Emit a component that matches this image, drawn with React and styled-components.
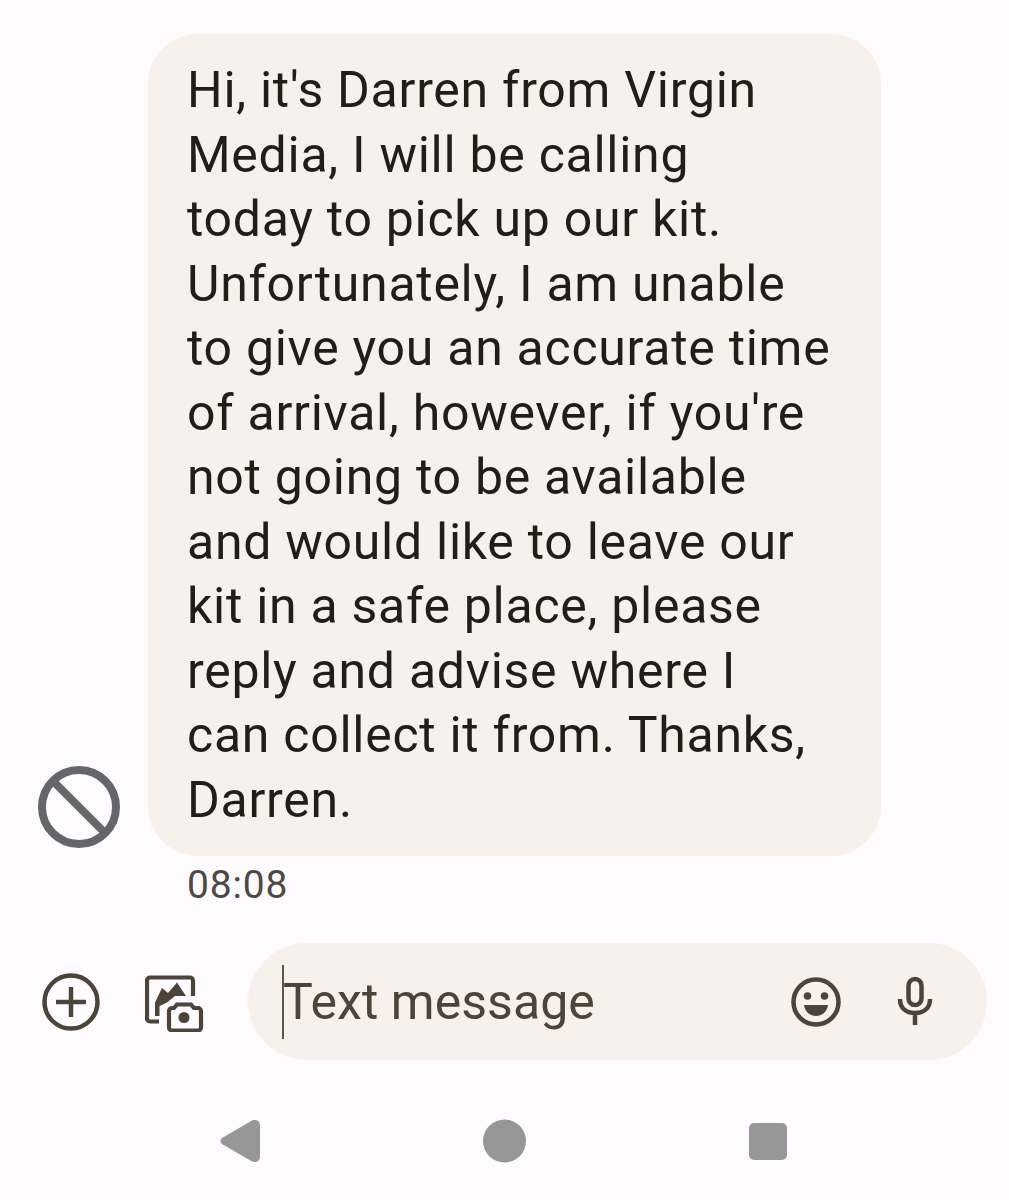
import React from "react";
import styled, { createGlobalStyle } from "styled-components";

const Global = createGlobalStyle`
  html, body { margin: 0; padding: 0; background: #fdfbfe; }
  #root { width: 1009px; height: 1200px; overflow: hidden; }
`;
const Screen = styled.main`
  width: 1009px; height: 1200px; box-sizing: border-box; padding-top: 34px;
  background: #fdfbfe; display: flex; flex-direction: column;
  font-family: Roboto, "Noto Sans", sans-serif;
`;
const MessageRow = styled.section`
  display: flex; align-items: flex-end; padding-left: 38px; gap: 28px;
`;
const Avatar = styled.svg`
  width: 82px; height: 82px; flex: none; margin-bottom: 8px; display: block;
`;
const Bubble = styled.div`
  width: 733px; height: 822px; box-sizing: border-box; padding: 24px 0 0 39px;
  background: #f8f0ea; border-radius: 50px; color: #231d18;
  font-size: 50px; line-height: 64.5px; letter-spacing: 0.72px;
`;
const Line = styled.span`display: block; white-space: nowrap;`;
const Time = styled.div`
  margin: 6px 0 0 187px; height: 46px; font-size: 39px; line-height: 46px; letter-spacing: 0.85px; color: #4f4943;
`;
const Composer = styled.section`
  display: flex; align-items: center; margin-top: 35px; padding-left: 42px;
`;
const ActionIcon = styled.svg`
  width: 60px; height: 60px; flex: none; display: block; margin-right: ${p => p.$gap}px;
`;
const Field = styled.div`
  width: 739px; height: 117px; box-sizing: border-box; background: #f8f0ea; border-radius: 59px;
  display: flex; align-items: center; padding: 0 54px 0 34px;
`;
const Caret = styled.span`
  width: 2px; height: 74px; background: #5d564f; flex: none; margin-right: -1px;
`;
const Placeholder = styled.span`
  flex: 1; font-size: 50px; letter-spacing: 0.05px; color: #4d4339; line-height: 60px;
`;
const FieldIcon = styled.svg`
  width: ${p => p.$w}px; height: 60px; flex: none; display: block; margin-right: ${p => p.$gap}px;
`;
const Nav = styled.nav`
  display: flex; align-items: center; margin-top: 59px; padding-left: 220px;
`;
const NavIcon = styled.svg`
  width: ${p => p.$w}px; height: 44px; display: block; flex: none; margin-right: ${p => p.$gap}px;
`;

const lines = [
  "Hi, it's Darren from Virgin",
  "Media, I will be calling",
  "today to pick up our kit.",
  "Unfortunately, I am unable",
  "to give you an accurate time",
  "of arrival, however, if you're",
  "not going to be available",
  "and would like to leave our",
  "kit in a safe place, please",
  "reply and advise where I",
  "can collect it from. Thanks,",
  "Darren.",
];

export default function App() {
  return (
    <Screen>
      <Global />
      <MessageRow>
        <Avatar viewBox="0 0 82 82" fill="none" stroke="#63666b" strokeWidth="8">
          <circle cx="41" cy="41" r="37" />
          <path d="M15 15 L67 67" />
        </Avatar>
        <Bubble>
          {lines.map(l => <Line key={l}>{l}</Line>)}
        </Bubble>
      </MessageRow>
      <Time>08:08</Time>
      <Composer>
        <ActionIcon $gap={43} viewBox="0 0 60 60" fill="none" stroke="#4d4339" strokeWidth="4.5">
          <circle cx="29" cy="30" r="26.5" />
          <path d="M14 30 H44 M29 15 V45" />
        </ActionIcon>
        <ActionIcon $gap={43} viewBox="0 0 60 60" fill="none">
          <path d="M14 49.5 H5 a3 3 0 0 1 -3 -3 V8.5 a3 3 0 0 1 3 -3 H45 a3 3 0 0 1 3 3 V24" stroke="#4d4339" strokeWidth="4.2" />
          <path d="M10 44 V30.5 L17 16 L23 21 L32 10.5 L41 24 H30 L22 30.5 L14.5 34 V44 Z" fill="#4d4339" />
          <path d="M27 36 H29 L32 32.5 H46 L49 36 H53 a3 3 0 0 1 3 3 V55.5 a3 3 0 0 1 -3 3 H27 a3 3 0 0 1 -3 -3 V39 a3 3 0 0 1 3 -3 Z" stroke="#4d4339" strokeWidth="4.2" fill="#fdfbfe" />
          <circle cx="39" cy="45.5" r="5.5" fill="#4d4339" />
        </ActionIcon>
        <Field>
          <Caret />
          <Placeholder>Text message</Placeholder>
          <FieldIcon $w={50} $gap={56} viewBox="0 0 50 60" fill="none">
            <circle cx="25" cy="30" r="22.5" stroke="#4d4339" strokeWidth="4.5" />
            <circle cx="16.5" cy="24" r="3.8" fill="#4d4339" />
            <circle cx="33.5" cy="24" r="3.8" fill="#4d4339" />
            <path d="M13 33 H37 C36 40 31 44 25 44 C19 44 14 40 13 33 Z" fill="#4d4339" />
          </FieldIcon>
          <FieldIcon $w={36} $gap={0} viewBox="0 0 36 60" fill="none" stroke="#4d4339" strokeWidth="4.5">
            <rect x="11.5" y="7" width="13" height="26" rx="6.5" />
            <path d="M3 27 C3 36 9 41 18 41 C27 41 33 36 33 27 M18 41 V53" />
          </FieldIcon>
        </Field>
      </Composer>
      <Nav>
        <NavIcon $w={40} $gap={223} viewBox="0 0 40 44" fill="#979797">
          <path d="M2 19 L32 1.5 C36 0 40 2 40 6 V38 C40 42 36 44 32 42.5 L2 25 C0 23.5 0 20.5 2 19 Z" />
        </NavIcon>
        <NavIcon $w={43} $gap={223} viewBox="0 0 43 44" fill="#979797">
          <circle cx="21.5" cy="22" r="21.5" />
        </NavIcon>
        <NavIcon $w={38} $gap={0} viewBox="0 0 38 44" fill="#979797">
          <rect x="0" y="4" width="38" height="37" rx="5" />
        </NavIcon>
      </Nav>
    </Screen>
  );
}
